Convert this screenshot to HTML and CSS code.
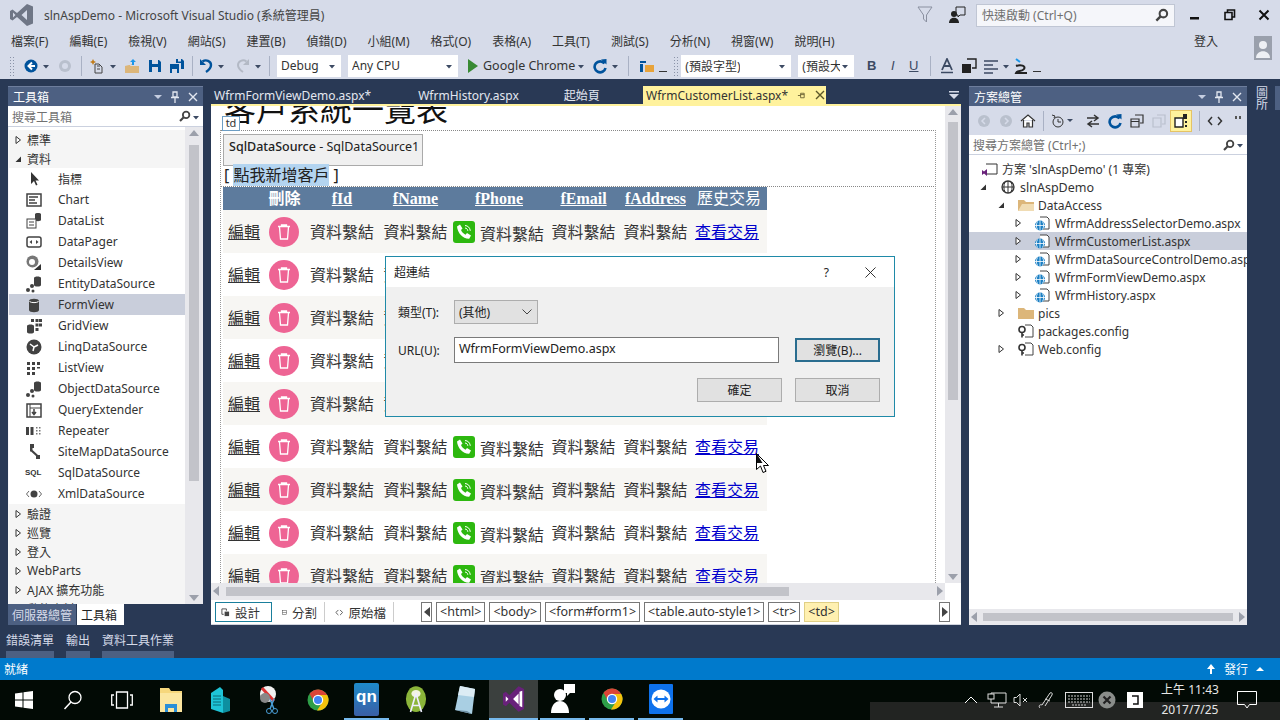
FILE: index.html
```html
<!DOCTYPE html>
<html lang="zh-Hant">
<head>
  <meta charset="UTF-8" />
  <title>slnAspDemo - Microsoft Visual Studio</title>
  <link rel="stylesheet" href="styles.css">
</head>
<body>
  <!-- shared icons -->
  <svg class="defs" width="0" height="0">
    <symbol id="dd" viewBox="0 0 8 8"><path d="M1 3h6L4 6.500z" fill="#3c4a63"/></symbol>
    <symbol id="open-tri" viewBox="0 0 10 10"><path d="M3 1.500 7.500 5 3 8.500z" fill="#fff" stroke="#333" stroke-width="1"/></symbol>
    <symbol id="down-tri" viewBox="0 0 10 10"><path d="M8 2.500V8H2.500z" fill="#333"/></symbol>
    <symbol id="magnifier" viewBox="0 0 16 16"><circle cx="10" cy="6" r="4" fill="none" stroke="#444" stroke-width="2.200"/><path d="M7 9 2.500 13.500" stroke="#444" stroke-width="2.600"/></symbol>
    <symbol id="trash" viewBox="0 0 30 30"><circle cx="15" cy="15" r="15" fill="#ee6494"/><path d="M9 9.500h12M12.500 9.500V8h5v1.500M10.500 10l1 12h7l1-12" fill="none" stroke="#fff" stroke-width="1.300"/></symbol>
    <symbol id="phone" viewBox="0 0 22 22"><rect width="22" height="22" rx="3" fill="#2db80f"/><path d="M4 5.500 7 3.500l2.500 4-1.500 1.500c.8 2 2.500 3.800 4.500 4.700L14 12l4 2.500-1.800 3.200C10 18 4.500 12 4 5.500z" fill="#fff"/><path d="M12 4.500c3 .2 5 2.300 5.300 5.300M12 7c1.500.1 2.700 1.200 2.800 2.800" fill="none" stroke="#fff" stroke-width="1"/></symbol>
    <symbol id="page-web" viewBox="0 0 18 16"><path d="M6 2h7l2 2v10H7" fill="#fff" stroke="#444"/><circle cx="6" cy="10.500" r="5" fill="#1a7fc4"/><path d="M1 10.500h10M6 5.500v10M3.500 6.500c-1.500 2.500-1.500 5.500 0 8M8.500 6.500c1.500 2.500 1.500 5.500 0 8" stroke="#fff" stroke-width=".8" fill="none"/></symbol>
    <symbol id="config" viewBox="0 0 18 16"><path d="M8 2h6l2 2v10H8" fill="#fff" stroke="#444"/><circle cx="5" cy="6.500" r="3" fill="none" stroke="#333" stroke-width="1.600"/><path d="M5 9v5.500M5 12h2" stroke="#333" stroke-width="1.600"/></symbol>
    <symbol id="folder" viewBox="0 0 18 16"><path d="M1 3h6l2 2h8v9H1z" fill="#dcb67a"/></symbol>
    <symbol id="cyl" viewBox="0 0 18 18"><path d="M4 5c0-3 10-3 10 0v9c0 3-10 3-10 0z" fill="#424242"/><path d="M4.500 5.500c1.500 1.500 7.500 1.500 9 0" stroke="#fff" fill="none"/></symbol>
    <symbol id="entity" viewBox="0 0 18 18"><path d="M9 3c0-2 7-2 7 0v7c0 2-7 2-7 0z" fill="#424242"/><circle cx="3" cy="15" r="2" fill="#424242"/><circle cx="7" cy="11" r="2" fill="#424242"/><circle cx="8" cy="16" r="1.500" fill="#424242"/></symbol>
    <symbol id="chrome" viewBox="0 0 24 24"><circle cx="12" cy="12" r="10.500" fill="#2e9e48"/><path d="M12 7h9.200A10.500 10.500 0 0 1 11 22.500l4.500-7z" fill="#f4c20d"/><path d="M12 7h9.200A10.500 10.500 0 0 0 3.500 5.800l4.200 7.500A5 5 0 0 1 12 7z" fill="#db4437"/><circle cx="12" cy="12" r="5.200" fill="#fff"/><circle cx="12" cy="12" r="4" fill="#4285f4"/></symbol>
  </svg>

  <div class="app">
    <header class="titlebar">
      <svg class="vs-logo" viewBox="0 0 24 24" width="24" height="24"><path d="M17 1 23 3.500v17L17 23 7 14l-4.500 3.500L0 16V8l2.500-1.500L7 10zM17 7l-5.500 5 5.500 5zM3 9.500v5l2.500-2.500z" fill="#6f7686"/></svg>
      <span class="title-text">slnAspDemo - Microsoft Visual Studio (系統管理員)</span>
      <svg class="funnel" viewBox="0 0 16 18" width="16" height="18"><path d="M1 1h14L9.500 9v7L6.500 13V9z" fill="none" stroke="#8a90a0"/></svg>
      <svg class="feedback" viewBox="0 0 18 18" width="18" height="18"><circle cx="6" cy="8" r="3" fill="#222"/><path d="M1 17c0-7 10-7 10 0z" fill="#222"/><path d="M8 1h9v8h-5l-2 2V9H8z" fill="none" stroke="#222"/></svg>
      <div class="quick">
        <span>快速啟動 (Ctrl+Q)</span>
        <svg viewBox="0 0 16 16" width="15" height="15"><use href="#magnifier"/></svg>
      </div>
      <div class="winbtns">
        <svg viewBox="0 0 12 12" width="12" height="12"><rect x="1" y="8" width="9" height="2.500" fill="#111"/></svg>
        <svg viewBox="0 0 12 12" width="12" height="12"><path d="M3.500 3V1h7v7H8.500M1 3.500h7v7H1z" fill="none" stroke="#111" stroke-width="1.600"/></svg>
        <svg viewBox="0 0 12 12" width="12" height="12"><path d="M1.500 1.500l9 9M10.500 1.500l-9 9" stroke="#111" stroke-width="2"/></svg>
      </div>
    </header>

    <nav class="menubar">
      <span>檔案(F)</span><span>編輯(E)</span><span>檢視(V)</span><span>網站(S)</span><span>建置(B)</span><span>偵錯(D)</span><span>小組(M)</span><span>格式(O)</span><span>表格(A)</span><span>工具(T)</span><span>測試(S)</span><span>分析(N)</span><span>視窗(W)</span><span>說明(H)</span>
      <span class="signin">登入</span>
      <svg class="avatar" viewBox="0 0 18 24" width="18" height="24"><rect width="18" height="24" fill="#9aa0ac"/><circle cx="9" cy="9" r="4" fill="#eef0f4"/><path d="M2 22c0-9 14-9 14 0z" fill="#eef0f4"/></svg>
    </nav>

    <div class="toolbar">
      <i class="grip"></i>
      <svg class="tb g6" viewBox="0 0 16 16"><circle cx="8" cy="8" r="6.500" fill="#00539c"/><path d="M9 4.500 5.500 8 9 11.500M6 8h6" fill="none" stroke="#fff" stroke-width="2"/></svg>
      <svg class="dd"><use href="#dd"/></svg>
      <svg class="tb g4" viewBox="0 0 16 16"><circle cx="8" cy="8" r="6" fill="#b9c0cd"/><circle cx="8" cy="8" r="3" fill="#d6dbe9"/></svg>
      <i class="sep"></i>
      <svg class="tb" viewBox="0 0 16 16"><path d="M5 6h4l3 3v6H5z" fill="none" stroke="#444"/><path d="M3 1l1 2 2 1-2 1-1 2-1-2-2-1 2-1z" fill="#c27d1a"/><path d="M7 8h3M7 11h3" stroke="#444"/></svg>
      <svg class="dd"><use href="#dd"/></svg>
      <svg class="tb g4" viewBox="0 0 16 16"><path d="M1 8h14v7H1z" fill="#dcb67a"/><path d="M1 8h5l1-2h2" fill="#dcb67a"/><path d="M9 1l3 3h-2v3H8V4H6z" fill="#1c97ea"/></svg>
      <svg class="tb g3" viewBox="0 0 16 16"><path d="M2 2h10l2 2v10H2z" fill="#00539c"/><rect x="5" y="2" width="6" height="4" fill="#d6dbe9"/><rect x="5" y="9" width="6" height="5" fill="#d6dbe9"/></svg>
      <svg class="tb g2" viewBox="0 0 16 16"><path d="M1 6h9v9H1z" fill="#00539c"/><path d="M7 1h6l2 2v8h-3V5H7z" fill="#00539c"/><rect x="3" y="11" width="5" height="4" fill="#d6dbe9"/><rect x="9" y="1" width="3" height="2.500" fill="#d6dbe9"/></svg>
      <i class="sep sep-tight"></i>
      <svg class="tb" viewBox="0 0 16 16"><path d="M4.500 3.500C8 1 13 3 13 7c0 3-2 5-5 7" fill="none" stroke="#00539c" stroke-width="2.400"/><path d="M2 1v6h6z" fill="#00539c"/></svg>
      <svg class="dd g2"><use href="#dd"/></svg>
      <svg class="tb g8" viewBox="0 0 16 16"><path d="M11.500 3.500C8 1 3 3 3 7c0 3 2 5 5 7" fill="none" stroke="#b3b9c5" stroke-width="2"/><path d="M14 1v6H8z" fill="#b3b9c5"/></svg>
      <svg class="dd g3"><use href="#dd"/></svg>
      <i class="sep sep-wide"></i>
      <div class="combo combo-debug"><span>Debug</span><svg class="dd"><use href="#dd"/></svg></div>
      <div class="combo combo-cpu"><span>Any CPU</span><svg class="dd"><use href="#dd"/></svg></div>
      <svg class="play" viewBox="0 0 10 14" width="10" height="14"><path d="M0 0l10 7-10 7z" fill="#388a34"/></svg>
      <span class="run-label">Google Chrome</span>
      <svg class="dd"><use href="#dd"/></svg>
      <svg class="tb g4" viewBox="0 0 16 16"><path d="M12.500 5.500A5.500 5.500 0 1 0 13.500 10" fill="none" stroke="#00539c" stroke-width="2.600"/><path d="M9 1.500 14.500 1v5.500z" fill="#00539c"/></svg>
      <svg class="dd"><use href="#dd"/></svg>
      <i class="sep sep-run"></i>
      <svg class="tb" viewBox="0 0 16 16"><path d="M1 3h6v2H1zM1 6h3v8H1z" fill="#00539c"/><path d="M6 7h9v7H6z" fill="#e8a33a"/></svg>
      <span class="overflow"></span>
      <i class="grip grip-b"></i>
      <div class="combo combo-font"><span>(預設字型)</span><svg class="dd"><use href="#dd"/></svg></div>
      <div class="combo combo-size"><span>(預設大小)</span><svg class="dd"><use href="#dd"/></svg></div>
      <b class="fmt">B</b><em class="fmt">I</em><u class="fmt">U</u>
      <i class="sep"></i>
      <svg class="tb" viewBox="0 0 16 16"><path d="M3 12 8 1l5 11M5 8h6" fill="none" stroke="#3c4a63" stroke-width="1.800"/><path d="M2 14.500h12" stroke="#3c4a63" stroke-width="1.500"/></svg>
      <svg class="tb g2" viewBox="0 0 16 16"><rect x="1" y="6" width="9" height="9" fill="#222"/><path d="M6 1h9v9h-4" fill="none" stroke="#222" stroke-width="1.400"/></svg>
      <svg class="tb g2" viewBox="0 0 16 16"><path d="M1 3h14M1 7h9M1 11h14M1 15h9" stroke="#3c4a63" stroke-width="1.500"/></svg>
      <svg class="dd"><use href="#dd"/></svg>
      <svg class="tb" viewBox="0 0 16 16"><path d="M3 1l4 3" stroke="#1c97ea" stroke-width="2"/><path d="M3 8c5-2 10 0 8 3s-7 1-8 4h11" fill="none" stroke="#222" stroke-width="2"/></svg>
      <span class="overflow"></span>
    </div>

    <div class="workspace">
      <!-- toolbox -->
      <aside class="panel toolbox">
        <div class="panel-title"><span>工具箱</span><span class="panel-btns"><svg viewBox="0 0 8 8" width="8" height="8"><path d="M0 2h8L4 6z" fill="#c5cde0"/></svg><svg viewBox="0 0 10 12" width="10" height="12"><path d="M3 1h4v5H3zM1 6.500h8M5 7v5" fill="none" stroke="#e3e7f0" stroke-width="1.300"/></svg><svg viewBox="0 0 10 10" width="10" height="10"><path d="M1 1l8 8M9 1l-8 8" stroke="#e3e7f0" stroke-width="1.400"/></svg></span></div>
        <div class="search"><span>搜尋工具箱</span><svg viewBox="0 0 16 16" width="13" height="13"><use href="#magnifier"/></svg><svg class="dd"><use href="#dd"/></svg></div>
        <div class="toolbox-body">
          <ul class="toollist">
            <li class="group"><svg class="tri"><use href="#open-tri"/></svg>標準</li>
            <li class="group"><svg class="tri"><use href="#down-tri"/></svg>資料</li>
            <li class="item"><svg viewBox="0 0 18 18"><path d="M6 2v12l3-3 2 4.500 1.500-.7-2-4.300H14z" fill="#333"/></svg>指標</li>
            <li class="item"><svg viewBox="0 0 18 18"><rect x="2" y="3" width="14" height="12" fill="none" stroke="#424242" stroke-width="1.500"/><path d="M4 6h9M4 9h6M4 12h8" stroke="#424242" stroke-width="1.500"/></svg>Chart</li>
            <li class="item"><svg viewBox="0 0 18 18"><path d="M10 2c0-1.500 6-1.500 6 0v6c0 1.500-6 1.500-6 0z" fill="#424242"/><rect x="2" y="7" width="9" height="9" fill="#fff" stroke="#424242"/><path d="M4 10h5M4 13h5" stroke="#424242"/></svg>DataList</li>
            <li class="item"><svg viewBox="0 0 18 18"><rect x="2" y="4" width="14" height="10" rx="2" fill="none" stroke="#424242" stroke-width="1.500"/><path d="M9 4v10M7 7v4L4.500 9zM11 7v4l2.500-2z" fill="#424242"/></svg>DataPager</li>
            <li class="item"><svg viewBox="0 0 18 18"><circle cx="7.500" cy="7.500" r="6" fill="#777"/><circle cx="7" cy="8" r="3" fill="#fff"/><path d="M9 16l7-6v6z" fill="#333"/></svg>DetailsView</li>
            <li class="item"><svg viewBox="0 0 18 18"><use href="#entity"/></svg>EntityDataSource</li>
            <li class="item selected"><svg viewBox="0 0 18 18"><use href="#cyl"/></svg>FormView</li>
            <li class="item"><svg viewBox="0 0 18 18"><path d="M2 9c0-2 7-2 7 0v6c0 2-7 2-7 0z" fill="#424242"/><path d="M6 2h3v3H6zM10.500 2h3v3h-3zM14 2h3v3h-3zM10.500 6.500h3v3h-3zM14 6.500h3v3h-3zM10.500 11h3v3h-3z" fill="#424242"/></svg>GridView</li>
            <li class="item"><svg viewBox="0 0 18 18"><circle cx="9" cy="9" r="7.500" fill="#424242"/><path d="M5 6l4 3-1 4M9 9l4-2" stroke="#fff" stroke-width="1.500" fill="none"/></svg>LinqDataSource</li>
            <li class="item"><svg viewBox="0 0 18 18"><path d="M2 3h3v3H2zM7 3h3v3H7zM12 3h3v3h-3zM2 8h3v3H2zM7 8h3v3H7zM12 8h3v1.500h-3zM2 13h3v3H2zM7 13h3v3H7z" fill="#424242"/></svg>ListView</li>
            <li class="item"><svg viewBox="0 0 18 18"><use href="#entity"/></svg>ObjectDataSource</li>
            <li class="item"><svg viewBox="0 0 18 18"><rect x="2" y="3" width="14" height="13" fill="none" stroke="#424242" stroke-width="1.500"/><path d="M5 3v13M5 7h11" stroke="#424242"/><path d="M9 8v5M7 11l2 2.500 2-2.500" stroke="#424242" fill="none" stroke-width="1.500"/></svg>QueryExtender</li>
            <li class="item"><svg viewBox="0 0 18 18"><path d="M1 5h3v8H1zM5.500 5h3v8h-3z" fill="#424242"/><path d="M11 5h1.500v1.500H11zM14 5h1.500v1.500H14zM11 8h1.500v1.500H11zM14 8h1.500v1.500H14zM11 11h1.500v1.500H11zM14 11h1.500v1.500H14z" fill="#777"/></svg>Repeater</li>
            <li class="item"><svg viewBox="0 0 18 18"><path d="M5 1h4v4H7.500v2L13 12h2v4h-4v-3L6 8.500H5z" fill="#424242"/></svg>SiteMapDataSource</li>
            <li class="item"><span class="sql-mark">SQL</span>SqlDataSource</li>
            <li class="item"><svg viewBox="0 0 18 18"><circle cx="9" cy="9" r="3.500" fill="#424242"/><path d="M4 6 1.500 9 4 12M14 6l2.500 3-2.500 3" fill="none" stroke="#666"/></svg>XmlDataSource</li>
            <li class="group"><svg class="tri"><use href="#open-tri"/></svg>驗證</li>
            <li class="group"><svg class="tri"><use href="#open-tri"/></svg>巡覽</li>
            <li class="group"><svg class="tri"><use href="#open-tri"/></svg>登入</li>
            <li class="group"><svg class="tri"><use href="#open-tri"/></svg>WebParts</li>
            <li class="group"><svg class="tri"><use href="#open-tri"/></svg>AJAX 擴充功能</li>
            <li class="group"><svg class="tri"><use href="#open-tri"/></svg>動態資料</li>
          </ul>
          <div class="vscroll"><span class="arrow-up"></span><span class="thumb"></span><span class="arrow-down"></span></div>
        </div>
        <div class="panel-tabs"><span>伺服器總管</span><span class="on">工具箱</span></div>
      </aside>

      <!-- designer -->
      <main class="document">
        <div class="tabstrip">
          <span class="tab">WfrmFormViewDemo.aspx*</span>
          <span class="tab">WfrmHistory.aspx</span>
          <span class="tab">起始頁</span>
          <span class="tab active">WfrmCustomerList.aspx*<svg viewBox="0 0 10 10" width="9" height="9"><path d="M1 5h3M4 2.500h4v5H4zM4 4h4" fill="none" stroke="#6b6333"/></svg><svg viewBox="0 0 10 10" width="10" height="10"><path d="M1 1l8 8M9 1l-8 8" stroke="#5c5728" stroke-width="1.400"/></svg></span>
          <svg class="tab-menu" viewBox="0 0 10 10" width="10" height="10"><path d="M0 1h10v1.500H0zM0 4h10L5 9z" fill="#d6dbe9"/></svg>
        </div>
        <div class="design-area">
          <div class="design-left">
            <div class="surface">
              <h1>客戶系統一覽表</h1>
              <span class="td-tag">td</span>
              <div class="selected-cell">
                <div class="datasource"><b>SqlDataSource</b> - SqlDataSource1</div>
                <div class="addlink">[ <mark>點我新增客戶</mark> ]</div>
              </div>
              <table class="grid">
                <colgroup><col class="c1"><col class="c2"><col class="c3"><col class="c4"><col class="c5"><col class="c6"><col class="c7"><col class="c8"></colgroup>
                <thead><tr><th></th><th>刪除</th><th><u>fId</u></th><th><u>fName</u></th><th><u>fPhone</u></th><th><u>fEmail</u></th><th><u>fAddress</u></th><th class="plain">歷史交易</th></tr></thead>
                <tbody>
                  <tr><td class="edit">編輯</td><td><svg class="del"><use href="#trash"/></svg></td><td>資料繫結</td><td>資料繫結</td><td><div class="phone-cell"><svg class="phone"><use href="#phone"/></svg><span>資料繫結</span></div></td><td>資料繫結</td><td>資料繫結</td><td><a>查看交易</a></td></tr>
                  <tr><td class="edit">編輯</td><td><svg class="del"><use href="#trash"/></svg></td><td>資料繫結</td><td>資料繫結</td><td><div class="phone-cell"><svg class="phone"><use href="#phone"/></svg><span>資料繫結</span></div></td><td>資料繫結</td><td>資料繫結</td><td><a>查看交易</a></td></tr>
                  <tr><td class="edit">編輯</td><td><svg class="del"><use href="#trash"/></svg></td><td>資料繫結</td><td>資料繫結</td><td><div class="phone-cell"><svg class="phone"><use href="#phone"/></svg><span>資料繫結</span></div></td><td>資料繫結</td><td>資料繫結</td><td><a>查看交易</a></td></tr>
                  <tr><td class="edit">編輯</td><td><svg class="del"><use href="#trash"/></svg></td><td>資料繫結</td><td>資料繫結</td><td><div class="phone-cell"><svg class="phone"><use href="#phone"/></svg><span>資料繫結</span></div></td><td>資料繫結</td><td>資料繫結</td><td><a>查看交易</a></td></tr>
                  <tr><td class="edit">編輯</td><td><svg class="del"><use href="#trash"/></svg></td><td>資料繫結</td><td>資料繫結</td><td><div class="phone-cell"><svg class="phone"><use href="#phone"/></svg><span>資料繫結</span></div></td><td>資料繫結</td><td>資料繫結</td><td><a>查看交易</a></td></tr>
                  <tr><td class="edit">編輯</td><td><svg class="del"><use href="#trash"/></svg></td><td>資料繫結</td><td>資料繫結</td><td><div class="phone-cell"><svg class="phone"><use href="#phone"/></svg><span>資料繫結</span></div></td><td>資料繫結</td><td>資料繫結</td><td><a>查看交易</a></td></tr>
                  <tr><td class="edit">編輯</td><td><svg class="del"><use href="#trash"/></svg></td><td>資料繫結</td><td>資料繫結</td><td><div class="phone-cell"><svg class="phone"><use href="#phone"/></svg><span>資料繫結</span></div></td><td>資料繫結</td><td>資料繫結</td><td><a>查看交易</a></td></tr>
                  <tr><td class="edit">編輯</td><td><svg class="del"><use href="#trash"/></svg></td><td>資料繫結</td><td>資料繫結</td><td><div class="phone-cell"><svg class="phone"><use href="#phone"/></svg><span>資料繫結</span></div></td><td>資料繫結</td><td>資料繫結</td><td><a>查看交易</a></td></tr>
                  <tr><td class="edit">編輯</td><td><svg class="del"><use href="#trash"/></svg></td><td>資料繫結</td><td>資料繫結</td><td><div class="phone-cell"><svg class="phone"><use href="#phone"/></svg><span>資料繫結</span></div></td><td>資料繫結</td><td>資料繫結</td><td><a>查看交易</a></td></tr>
                </tbody>
              </table>
            </div>
            <div class="hscroll"><span class="arrow-left"></span><span class="hthumb"></span><span class="arrow-right"></span></div>
          </div>
          <div class="vscroll doc-vscroll"><span class="arrow-up"></span><span class="thumb"></span><span class="arrow-down"></span></div>
        </div>
        <div class="designbar">
          <span class="view-btn on"><svg viewBox="0 0 10 10" width="9" height="9"><path d="M1 1h5v2M1 1v6h2" fill="none" stroke="#444"/><rect x="4" y="4" width="5" height="5" fill="#444"/></svg>設計</span>
          <span class="view-btn"><svg viewBox="0 0 10 10" width="9" height="9"><rect x="1" y="1" width="8" height="8" fill="none" stroke="#444"/><path d="M1 5h8" stroke="#444"/></svg>分割</span>
          <span class="view-btn last"><svg viewBox="0 0 10 10" width="9" height="9"><path d="M4 2 1 5l3 3M6 2l3 3-3 3" fill="none" stroke="#444"/></svg>原始檔</span>
          <span class="chip-arrow"><svg viewBox="0 0 6 10" width="6" height="10"><path d="M6 0v10L0 5z" fill="#444"/></svg></span>
          <span class="chip">&lt;html&gt;</span><span class="chip">&lt;body&gt;</span><span class="chip">&lt;form#form1&gt;</span><span class="chip">&lt;table.auto-style1&gt;</span><span class="chip">&lt;tr&gt;</span><span class="chip hot">&lt;td&gt;</span>
          <span class="chip-arrow end"><svg viewBox="0 0 6 10" width="6" height="10"><path d="M0 0v10l6-5z" fill="#444"/></svg></span>
        </div>

        <!-- hyperlink dialog -->
        <div class="dialog">
          <div class="dialog-title"><span>超連結</span><span class="help">?</span><svg viewBox="0 0 12 12" width="11" height="11"><path d="M.5.500l11 11M11.500.500l-11 11" stroke="#222"/></svg></div>
          <div class="dialog-body">
            <div class="field">
              <label>類型(T):</label>
              <div class="select"><span>(其他)</span><svg viewBox="0 0 10 6" width="10" height="6"><path d="M.5.500 5 5 9.500.500" fill="none" stroke="#444"/></svg></div>
            </div>
            <div class="field url-field">
              <label>URL(U):</label>
              <div class="input">WfrmFormViewDemo.aspx</div>
              <button class="btn primary">瀏覽(B)...</button>
            </div>
            <div class="dialog-actions"><button class="btn">確定</button><button class="btn">取消</button></div>
          </div>
        </div>
      </main>

      <!-- solution explorer -->
      <aside class="panel solution">
        <div class="panel-title"><span>方案總管</span><span class="panel-btns"><svg viewBox="0 0 8 8" width="8" height="8"><path d="M0 2h8L4 6z" fill="#c5cde0"/></svg><svg viewBox="0 0 10 12" width="10" height="12"><path d="M3 1h4v5H3zM1 6.500h8M5 7v5" fill="none" stroke="#e3e7f0" stroke-width="1.300"/></svg><svg viewBox="0 0 10 10" width="10" height="10"><path d="M1 1l8 8M9 1l-8 8" stroke="#e3e7f0" stroke-width="1.400"/></svg></span></div>
        <div class="sol-toolbar">
          <svg viewBox="0 0 16 16"><circle cx="8" cy="8" r="6" fill="#b9c0cd"/><path d="M9 5 6 8l3 3" stroke="#d6dbe9" fill="none" stroke-width="1.500"/></svg>
          <svg viewBox="0 0 16 16"><circle cx="8" cy="8" r="6" fill="#b9c0cd"/><path d="M7 5l3 3-3 3" stroke="#d6dbe9" fill="none" stroke-width="1.500"/></svg>
          <svg viewBox="0 0 16 16"><path d="M1 8l7-6 7 6M3.500 7v7h3.500v-4h2v4h3.500V7" fill="#fff" stroke="#333" stroke-width="1.200"/></svg>
          <i class="sep"></i>
          <svg class="wide" viewBox="0 0 22 16"><circle cx="7" cy="9" r="5" fill="none" stroke="#333"/><path d="M7 6v3h3M1 2l3 1-1 2" fill="none" stroke="#333"/><path d="M16 6h6l-3 3z" fill="#3c4a63"/></svg>
          <svg viewBox="0 0 16 16"><path d="M2 5h11M9 2l4 3-4 3M14 11H3M7 8l-4 3 4 3" fill="none" stroke="#333" stroke-width="1.500"/></svg>
          <svg viewBox="0 0 16 16"><path d="M12.500 5.500A5.500 5.500 0 1 0 13.500 10" fill="none" stroke="#00539c" stroke-width="2.600"/><path d="M9 1.500 14.500 1v5.500z" fill="#00539c"/></svg>
          <svg viewBox="0 0 16 16"><path d="M6 2h8v8h-3M2 6h8v8H2zM2 8.500h8" fill="none" stroke="#333" stroke-width="1.200"/></svg>
          <svg viewBox="0 0 16 16"><path d="M6 2h8v9h-3M2 5h8v9H2z" fill="none" stroke="#b9c0cd" stroke-width="1.200"/></svg>
          <span class="toggled"><svg viewBox="0 0 16 16"><path d="M2 5h8v9H2z" fill="#fff" stroke="#222" stroke-width="1.400"/><path d="M10 1h4v5h-4zM12 8h2v2h-2zM12 12h2v2h-2z" fill="#222"/></svg></span>
          <i class="sep"></i>
          <svg viewBox="0 0 16 16"><path d="M5 4 1.500 8 5 12M11 4l3.500 4-3.500 4" fill="none" stroke="#333" stroke-width="1.500"/></svg>
          <span class="sol-more"></span>
        </div>
        <div class="search sol-search"><span>搜尋方案總管 (Ctrl+;)</span><svg viewBox="0 0 16 16" width="13" height="13"><use href="#magnifier"/></svg><svg class="dd"><use href="#dd"/></svg></div>
        <ul class="tree">
          <li class="lv0"><svg viewBox="0 0 18 16"><path d="M5 3h11v10H5" fill="#fff" stroke="#333"/><path d="M1 9l2 1.500L6 8v7l-3-2.500-2 1.500z" fill="#68217a"/></svg>方案 'slnAspDemo' (1 專案)</li>
          <li class="lv1 strong"><svg class="tri"><use href="#down-tri"/></svg><svg viewBox="0 0 18 16"><circle cx="9" cy="8" r="6" fill="none" stroke="#333" stroke-width="1.300"/><path d="M3 8h12M9 2v12M6 3c-1.500 3-1.500 7 0 10M12 3c1.500 3 1.500 7 0 10" fill="none" stroke="#333"/></svg>slnAspDemo</li>
          <li class="lv2"><svg class="tri"><use href="#down-tri"/></svg><svg viewBox="0 0 18 16"><path d="M1 3h6l2 2h8v9H1z" fill="#dcb67a"/><path d="M5 7h12v7H1z" fill="#f0dcb4"/></svg>DataAccess</li>
          <li class="lv3"><svg class="tri"><use href="#open-tri"/></svg><svg viewBox="0 0 18 16"><use href="#page-web"/></svg>WfrmAddressSelectorDemo.aspx</li>
          <li class="lv3 selected"><svg class="tri"><use href="#open-tri"/></svg><svg viewBox="0 0 18 16"><use href="#page-web"/></svg>WfrmCustomerList.aspx</li>
          <li class="lv3"><svg class="tri"><use href="#open-tri"/></svg><svg viewBox="0 0 18 16"><use href="#page-web"/></svg>WfrmDataSourceControlDemo.aspx</li>
          <li class="lv3"><svg class="tri"><use href="#open-tri"/></svg><svg viewBox="0 0 18 16"><use href="#page-web"/></svg>WfrmFormViewDemo.aspx</li>
          <li class="lv3"><svg class="tri"><use href="#open-tri"/></svg><svg viewBox="0 0 18 16"><use href="#page-web"/></svg>WfrmHistory.aspx</li>
          <li class="lv2-b"><svg class="tri"><use href="#open-tri"/></svg><svg viewBox="0 0 18 16"><use href="#folder"/></svg>pics</li>
          <li class="lv2-b no-tri"><svg viewBox="0 0 18 16"><use href="#config"/></svg>packages.config</li>
          <li class="lv2-b"><svg class="tri"><use href="#open-tri"/></svg><svg viewBox="0 0 18 16"><use href="#config"/></svg>Web.config</li>
        </ul>
        <div class="hscroll sol-hscroll"><span class="arrow-left"></span><span class="hthumb"></span><span class="arrow-right"></span></div>
      </aside>

      <div class="rightstrip"><span>圖<br>所</span><i></i></div>
    </div>

    <div class="bottomtabs">
      <div><span>錯誤清單</span><i></i></div>
      <div><span>輸出</span><i></i></div>
      <div><span>資料工具作業</span><i></i></div>
    </div>

    <footer class="statusbar">
      <span>就緒</span>
      <span class="publish"><svg viewBox="0 0 10 12" width="10" height="12"><path d="M5 1 9 6H6v5H4V6H1z" fill="#fff"/></svg>發行<svg viewBox="0 0 8 6" width="8" height="6"><path d="M0 5h8L4 1z" fill="#fff"/></svg></span>
    </footer>

    <div class="taskbar">
      <span class="task first"><svg viewBox="0 0 18 18" width="18" height="18"><path d="M0 2.500 7.500 1.500V8.500H0zM8.500 1.300 18 0V8.500H8.500zM0 9.500H7.500V16.500L0 15.500zM8.500 9.500H18V18L8.500 16.700z" fill="#fff"/></svg></span>
      <span class="task"><svg viewBox="0 0 20 20" width="20" height="20"><circle cx="12" cy="7.500" r="6" fill="none" stroke="#fff" stroke-width="1.300"/><path d="M8 12 1.500 19" stroke="#fff" stroke-width="1.500"/></svg></span>
      <span class="task"><svg viewBox="0 0 22 18" width="22" height="18"><path d="M5.500 1h11v16h-11zM3 4H.7v10H3M19 4h2.300v10H19" fill="none" stroke="#fff" stroke-width="1.300"/></svg></span>
      <span class="task"><svg viewBox="0 0 24 26" width="24" height="26"><path d="M1 1h9l2 3h11v21H1z" fill="#f6d77c"/><path d="M1 6h22v19H1z" fill="#fbe6a0"/><path d="M6 17h12v8h-3v-4H9v4H6z" fill="#2a8fd8"/></svg></span>
      <span class="task"><svg viewBox="0 0 24 30" width="24" height="30"><path d="M3 8l9-6 3 3v23L3 24z" fill="#1ec3d6"/><path d="M15 11l7 3v12l-7 2z" fill="#0d8fa0"/><path d="M5 11h8M5 14h8M5 17h8M5 20h8" stroke="#0a6a78"/></svg></span>
      <span class="task"><svg viewBox="0 0 24 30" width="24" height="30"><circle cx="11" cy="9" r="8" fill="#f1f1f1"/><path d="M5 3l12 13" stroke="#d33" stroke-width="3"/><circle cx="8" cy="13" r="5" fill="#888"/><path d="M13 14l4 10M17 14l-4 10" stroke="#4a9fd8" stroke-width="1.500"/><circle cx="12" cy="26" r="2.500" fill="none" stroke="#4a9fd8"/><circle cx="18" cy="26" r="2.500" fill="none" stroke="#4a9fd8"/></svg></span>
      <span class="task"><svg viewBox="0 0 24 24" width="24" height="30"><use href="#chrome"/></svg></span>
      <span class="task lit"><span class="qn">qn</span></span>
      <span class="task"><svg viewBox="0 0 24 32" width="22" height="32"><ellipse cx="12" cy="15" rx="11" ry="14" fill="#8bb53a"/><ellipse cx="12" cy="9" rx="5" ry="4" fill="#f2f4e2"/><path d="M12 9 6 29M12 9l6 20M8 22h8" stroke="#eef" stroke-width="1.800" fill="none"/></svg></span>
      <span class="task"><svg viewBox="0 0 24 30" width="24" height="30"><path d="M7 1l15 3-3 25L2 25z" fill="#a9cfe3"/><path d="M7 1l15 3-1 8L5 10z" fill="#dcecf4"/><path d="M2 25l17 4-5-3z" fill="#6e8fa3"/></svg></span>
      <span class="task active"><svg viewBox="0 0 24 30" width="22" height="30"><path d="M17 1 23 4v22l-6 3L7 19l-4 4-3-2V9l3-2 4 4z" fill="#68217a"/><path d="M17 9l-6 6 6 6zM3 12v6l3-3z" fill="#fff"/><path d="M18 7l3-1v18l-3-1.500z" fill="#fff"/></svg></span>
      <span class="task lit"><svg viewBox="0 0 24 32" width="24" height="32"><circle cx="9" cy="12" r="6" fill="#fff"/><path d="M0 30c0-16 18-16 18 0z" fill="#fff"/><path d="M13 1h11v9h-5l-3 3v-3h-3z" fill="#fff"/></svg></span>
      <span class="task lit"><svg viewBox="0 0 24 24" width="24" height="30"><use href="#chrome"/></svg></span>
      <span class="task lit"><svg viewBox="0 0 24 30" width="24" height="30"><rect width="24" height="30" rx="1" fill="#0e72ed"/><circle cx="12" cy="15" r="9.500" fill="#fff"/><path d="M4.500 15l4-3.500V14h7v-2.500l4 3.500-4 3.500V16h-7v2.500z" fill="#0e72ed"/></svg></span>

      <div class="tray">
        <svg viewBox="0 0 14 8" width="14" height="8"><path d="M1 7l6-6 6 6" fill="none" stroke="#fff"/></svg>
        <svg viewBox="0 0 20 16" width="20" height="16"><path d="M4 1h15v10H4zM11.500 11v4M7 15h9" fill="none" stroke="#ddd"/><rect x="1" y="2" width="6" height="5" fill="#020a05" stroke="#ddd"/></svg>
        <svg viewBox="0 0 18 14" width="18" height="14"><path d="M1 4.500h2.500L7 1v12L3.500 9.500H1z" fill="none" stroke="#ddd"/><path d="M10 5l4 4M14 5l-4 4" stroke="#ddd"/></svg>
        <svg viewBox="0 0 20 18" width="20" height="18"><path d="M3 17c-2-2 0-4 2-3M5 14 13 2c1-1 3 0 2 2L8 15M8 8l5 2" fill="none" stroke="#ddd"/></svg>
        <svg viewBox="0 0 28 16" width="28" height="16"><rect x=".5" y=".5" width="27" height="15" fill="none" stroke="#ddd"/><path d="M3 4h22M3 7h22M3 10h22M7 13h14" stroke="#ccc" stroke-dasharray="2 1"/></svg>
        <svg viewBox="0 0 18 18" width="18" height="18"><circle cx="9" cy="9" r="8.500" fill="#8a8d8a"/><path d="M5.500 5.500l7 7M12.500 5.500l-7 7" stroke="#222" stroke-width="2.200"/></svg>
        <svg viewBox="0 0 16 16" width="16" height="16"><rect width="16" height="16" fill="#fff"/><path d="M5 4h6v8H6" fill="none" stroke="#111" stroke-width="1.500"/></svg>
        <div class="clock"><span>上午 11:43</span><span>2017/7/25</span></div>
        <svg class="notify" viewBox="0 0 20 18" width="20" height="18"><path d="M.5.500h19v13h-7L10 17l-2.500-3.500h-7z" fill="none" stroke="#fff"/></svg>
      </div>
      <i class="ghost"></i>
    </div>

    <svg class="cursor" viewBox="0 0 13 21" width="13" height="21"><path d="M.5.500V16.500L4.500 13 7 19.500 10 18.300 7.500 12.500H12.500z" fill="#fff" stroke="#000"/><path d="M1 1v9l5.500 0z" fill="#111"/></svg>
  </div>
</body>
</html>
```

FILE: styles.css
```css
* { box-sizing: border-box; }
body {
  margin: 0;
  font-family: "Noto Sans", "Noto Sans CJK TC", sans-serif;
  font-size: 12px;
  color: #3c3c3c;
}
ul { list-style: none; margin: 0; padding: 0; }
.defs { position: absolute; }
.app {
  position: relative;
  width: 1280px;
  height: 720px;
  overflow: hidden;
  background: #293955;
  display: flex;
  flex-direction: column;
}

/* title + menu */
.titlebar {
  height: 30px;
  background: #d6dbe9;
  display: flex;
  align-items: center;
  padding-left: 10px;
}
.vs-logo { margin-right: 10px; }
.title-text { font-size: 12px; color: #444; flex: 1; }
.funnel { margin-right: 15px; }
.feedback { margin-right: 10px; }
.quick {
  width: 199px;
  height: 23px;
  background: #f5f6fa;
  border: 1px solid #c0c6d4;
  display: flex;
  align-items: center;
  justify-content: space-between;
  padding: 0 5px;
  color: #707070;
  font-size: 12px;
}
.winbtns {
  width: 105px;
  display: flex;
  justify-content: space-between;
  padding: 0 10px 0 14px;
}
.menubar {
  height: 22px;
  background: #d6dbe9;
  display: flex;
  align-items: center;
  gap: 21px;
  padding-left: 11px;
  font-size: 12px;
  color: #333;
  position: relative;
}
.signin { margin-left: auto; margin-right: 62px; }
.avatar { position: absolute; top: 6px; right: 8px; }

/* toolbar */
.toolbar {
  height: 27px;
  background: #d6dbe9;
  display: flex;
  align-items: center;
  padding-left: 9px;
}
.grip {
  width: 6px;
  height: 20px;
  margin-right: 7px;
  flex: none;
  background-image: radial-gradient(#8a93a8 1px, transparent 1px);
  background-size: 3px 3px;
}
.grip-b { margin-left: 4px; margin-right: 2px; }
.tb { width: 16px; height: 16px; margin: 0 2px; flex: none; }
.g2 { margin-left: 4px; }
.g3 { margin-left: 5px; }
.g4 { margin-left: 6px; }
.g6 { margin-left: 1px; }
.g8 { margin-left: 9px; }
.dd { width: 8px; height: 8px; flex: none; margin: 0 1px; }
.sep {
  width: 1px;
  height: 20px;
  background: #a9b1c4;
  margin: 0 6px;
  flex: none;
}
.sep-tight { margin: 0 3px 0 5px; }
.sep-wide { margin: 0 7px 0 6px; }
.sep-run { margin: 0 8px; }
.combo {
  height: 22px;
  background: #fff;
  display: flex;
  align-items: center;
  justify-content: space-between;
  padding: 0 4px;
  margin-right: 7px;
  font-size: 12px;
  color: #333;
  flex: none;
}
.combo span { white-space: nowrap; overflow: hidden; }
.combo-debug { width: 64px; }
.combo-cpu { width: 110px; margin-right: 10px; }
.combo-font { width: 110px; }
.combo-size { width: 56px; margin-right: 7px; }
.play { flex: none; margin-right: 5px; }
.run-label { font-size: 12.500px; color: #333; white-space: nowrap; margin-right: 1px; }
.overflow { width: 8px; height: 12px; border-bottom: 1px solid #333; margin: 0 2px; flex: none; }
.fmt { width: 21px; text-align: center; font-size: 13px; color: #3c4a63; flex: none; font-family: "Liberation Sans", sans-serif; }

/* main area */
.workspace {
  height: 546px;
  padding: 7px 0 0 8px;
  display: flex;
  gap: 8px;
}
.panel {
  display: flex;
  flex-direction: column;
  background: #fff;
  border-top: 1px solid #6d7d9c;
}
.panel-title {
  height: 19px;
  background: #4d6082;
  color: #fff;
  font-size: 12px;
  display: flex;
  align-items: center;
  justify-content: space-between;
  padding: 0 5px;
  flex: none;
}
.panel-btns { display: flex; align-items: center; gap: 8px; }
.search {
  height: 21px;
  background: #fff;
  display: flex;
  align-items: center;
  padding: 1px 2px 0 4px;
  color: #717171;
  font-size: 12px;
  flex: none;
  border-bottom: 1px solid #cbd1df;
}
.search span { flex: 1; }

.toolbox { width: 195px; }
.toolbox-body { height: 477px; display: flex; background: #f6f6f8; overflow: hidden; flex: none; }
.toollist { width: 176px; margin-left: 1px; padding-top: 3px; background: #fff; overflow: hidden; height: 477px; }
.group {
  height: 19px;
  display: flex;
  align-items: center;
  background: #f5f5f5;
  color: #333;
  padding-left: 4px;
  font-size: 12px;
  white-space: nowrap;
}
.tri { width: 10px; height: 10px; margin-right: 4px; flex: none; }
.item {
  height: 21px;
  display: flex;
  align-items: center;
  color: #333;
  font-size: 12px;
  padding-left: 16px;
}
.item svg { width: 18px; height: 18px; margin-right: 15px; flex: none; }
.item.selected { background: #c9cedb; }
.sql-mark {
  width: 18px;
  margin-right: 15px;
  font-size: 8px;
  font-weight: 700;
  color: #333;
  font-family: "Liberation Sans", sans-serif;
}
.vscroll {
  flex: 1;
  position: relative;
  background: #e8e8ec;
}
.vscroll .thumb { position: absolute; left: 4px; right: 4px; top: 18px; height: 336px; background: #c2c3c9; }
.arrow-up, .arrow-down {
  position: absolute;
  left: 50%;
  margin-left: -5px;
  border: 5px solid transparent;
}
.arrow-up { top: 3px; border-top: 0; border-bottom: 6px solid #9ca0ab; }
.arrow-down { bottom: 3px; border-bottom: 0; border-top: 6px solid #9ca0ab; }
.panel-tabs {
  height: 21px;
  background: #293955;
  display: flex;
  align-items: stretch;
  flex: 1;
}
.panel-tabs span {
  padding: 2px 4px 0;
  width: 68px;
  background: #4d6082;
  color: #d6dbe9;
  white-space: nowrap;
}
.panel-tabs .on { background: #fff; color: #222; width: 47px; margin-left: 1px; }

/* document */
.document { width: 750px; display: flex; flex-direction: column; background: #fff; }
.tabstrip {
  height: 18px;
  background: #293955;
  display: flex;
  align-items: center;
  color: #e3e7f0;
  font-size: 12px;
  position: relative;
  flex: none;
}
.tab { margin-left: 3px; margin-right: 44px; white-space: nowrap; }
.tab:nth-child(2) { margin-right: 42px; }
.tab.active {
  margin: 0;
  height: 18px;
  background: #fff29d;
  color: #333;
  padding: 0 5px 0 3px;
  display: flex;
  align-items: center;
  gap: 9px;
  width: 183px;
  position: absolute;
  left: 432px;
}
.tab.active svg { flex: none; }
.tab-menu { position: absolute; right: 2px; top: 4px; }
.design-area { height: 496px; display: flex; border-top: 2px solid #fff29d; flex: none; }
.design-left { width: 734px; display: flex; flex-direction: column; }
.doc-vscroll { background: #e8e8ec; height: 477px; flex: 1; }
.doc-vscroll .thumb { left: 3px; right: 3px; top: 16px; height: 278px; }
.surface {
  height: 477px;
  overflow: hidden;
  position: relative;
  padding-left: 9px;
  font-size: 16px;
  color: #333;
  background: #fff;
}
.surface::before, .surface::after {
  content: "";
  position: absolute;
  top: 24px;
  bottom: 0;
  border-left: 1px dotted #999;
}
.surface::before { left: 9px; }
.surface::after { left: 724px; }
.surface h1 {
  font-size: 32px;
  font-weight: 400;
  line-height: 40px;
  margin: -17px 0 0 4px;
  color: #111;
  height: 41px;
}
.td-tag {
  position: absolute;
  left: 11px;
  top: 10px;
  width: 18px;
  height: 15px;
  border: 1px solid #6d9ec4;
  background: #fff;
  font-size: 11px;
  line-height: 12px;
  text-align: center;
  color: #333;
}
.selected-cell {
  width: 716px;
  height: 57px;
  border: 1px dotted #888;
  padding: 3px 0 0 2px;
  background: #fff;
}
.datasource {
  width: 200px;
  height: 32px;
  border: 1px solid #aaa;
  background: #f0f0f0;
  font-size: 12.500px;
  line-height: 23px;
  padding-left: 5px;
  color: #222;
}
.datasource b { font-weight: 500; }
.addlink { font-size: 16px; line-height: 18px; padding-left: 1px; color: #222; white-space: nowrap; }
.addlink mark { background: #b3d4f0; color: #222; }
.grid {
  border-collapse: collapse;
  table-layout: fixed;
  width: 544px;
  margin-left: 3px;
}
.c1 { width: 42px; }
.c2 { width: 39px; }
.c3 { width: 76px; }
.c4 { width: 71px; }
.c5 { width: 96px; }
.c6 { width: 73px; }
.c7 { width: 71px; }
.c8 { width: 76px; }
.grid th {
  height: 23px;
  padding: 0;
  background: #5d7b9d;
  color: #fff;
  font: 700 16px/18px "Liberation Serif", "Noto Sans CJK TC", serif;
}
.grid th.plain { font-weight: 400; }
.grid td { height: 43px; padding: 0; text-align: center; white-space: nowrap; line-height: 22px; }
.grid tbody tr:nth-child(odd) { background: #f7f6f3; }
.grid .edit { text-align: left; padding-left: 5px; text-decoration: underline; }
.grid td:last-child { padding-right: 4px; }
.grid a { color: #0000cc; text-decoration: underline; }
.del { width: 30px; height: 30px; display: block; margin: 0 auto; position: relative; left: -1px; }
.phone-cell { display: flex; height: 28px; padding-left: 2px; align-items: flex-start; gap: 5px; }
.phone { width: 22px; height: 22px; flex: none; margin-top: 3px; }
.phone-cell span { margin-top: 5px; }

.hscroll { height: 17px; background: #e8e8ec; position: relative; flex: none; }
.hthumb { position: absolute; left: 15px; width: 563px; top: 4px; height: 9px; background: #c2c3c9; }
.arrow-left, .arrow-right { position: absolute; top: 3px; border: 5px solid transparent; }
.arrow-left { left: 2px; border-left: 0; border-right: 6px solid #9ca0ab; }
.arrow-right { right: 2px; border-right: 0; border-left: 6px solid #9ca0ab; }

.designbar {
  height: 25px;
  background: #fff;
  border-bottom: 1px solid #d0d4de;
  display: flex;
  align-items: center;
  padding-left: 4px;
  font-size: 12.500px;
  color: #333;
  position: relative;
  flex: none;
}
.view-btn {
  height: 20px;
  display: flex;
  align-items: center;
  gap: 5px;
  padding: 0 7px 0 5px;
  margin-right: 5px;
  border-right: 1px solid #ccc;
  white-space: nowrap;
  width: 48px;
}
.view-btn.on { width: 57px; border: 1px solid #1a7f9c; }
.view-btn.last { width: 64px; margin-right: 27px; }
.chip-arrow {
  width: 11px;
  height: 20px;
  border: 1px solid #777;
  display: flex;
  align-items: center;
  justify-content: center;
  margin-right: 4px;
  flex: none;
}
.chip-arrow.end { position: absolute; right: 11px; margin: 0; }
.chip {
  height: 20px;
  border: 1px solid #777;
  padding: 0 3px;
  margin-right: 4px;
  line-height: 17px;
  white-space: nowrap;
}
.chip.hot { background: #fff0b0; border-color: #e0cf85; }

/* dialog */
.dialog {
  position: absolute;
  left: 385px;
  top: 256px;
  width: 510px;
  height: 161px;
  border: 1px solid #1f8aa8;
  background: #f0f0f0;
  z-index: 5;
}
.dialog-title {
  height: 30px;
  background: #fff;
  display: flex;
  align-items: center;
  padding: 0 18px 0 8px;
  font-size: 12px;
  color: #222;
}
.dialog-title span:first-child { flex: 1; }
.help { margin-right: 36px; }
.dialog-body { padding: 13px 14px 0 12px; }
.field { display: flex; align-items: center; height: 24px; font-size: 12px; color: #222; }
.field label { width: 56px; }
.select {
  width: 84px;
  height: 24px;
  background: #e1e1e1;
  border: 1px solid #adadad;
  display: flex;
  align-items: center;
  justify-content: space-between;
  padding: 0 5px 0 4px;
}
.url-field { margin-top: 13px; height: 26px; justify-content: flex-start; }
.input {
  width: 326px;
  height: 26px;
  background: #fff;
  border: 1px solid #7a7a7a;
  padding-left: 4px;
  line-height: 22px;
  font-size: 12.500px;
  margin-right: 16px;
}
.btn {
  width: 85px;
  height: 24px;
  background: #e1e1e1;
  border: 1px solid #adadad;
  font: inherit;
  font-size: 12px;
  color: #222;
  padding: 0;
}
.btn.primary { border: 2px solid #2a6d8f; }
.dialog-actions { display: flex; justify-content: flex-end; gap: 13px; margin-top: 15px; }

/* solution explorer */
.solution { width: 278px; }
.sol-toolbar {
  height: 29px;
  background: #d6dbe9;
  display: flex;
  align-items: center;
  padding-left: 7px;
  gap: 6px;
  flex: none;
  position: relative;
}
.sol-toolbar svg { width: 16px; height: 16px; flex: none; }
.sol-toolbar svg.wide { width: 22px; margin-right: 6px; }
.sol-toolbar .sep { margin: 0 1px; }
.toggled { width: 22px; height: 22px; margin-left: -3px; background: #fff29d; border: 1px solid #e5c365; display: flex; align-items: center; justify-content: center; }
.sol-more { position: absolute; right: 6px; top: 10px; width: 6px; height: 3px; border-left: 2px solid #555; border-right: 2px solid #555; }
.sol-search { height: 20px; }
.tree { flex: 1; padding-top: 5px; overflow: hidden; font-size: 12px; color: #333; white-space: nowrap; }
.tree li { height: 18px; display: flex; align-items: center; }
.tree li > svg { width: 18px; height: 16px; margin-right: 3px; flex: none; }
.tree li > svg.tri { width: 10px; height: 10px; margin-right: 11px; }
.tree .lv0 { padding-left: 12px; }
.tree .lv1 { padding-left: 9px; }
.tree .lv2 { padding-left: 27px; }
.tree .lv2-b { padding-left: 27px; }
.tree .no-tri { padding-left: 48px; }
.tree .lv3 { padding-left: 44px; }
.tree .selected { background: #c9cedb; }
.tree .strong { font-size: 12.500px; }
.sol-hscroll { height: 16px; }
.sol-hscroll .hthumb { left: 14px; width: 250px; top: 4px; height: 8px; }

.rightstrip { flex: 1; color: #d6dbe9; position: relative; margin-left: -7px; font-size: 12px; line-height: 12px; padding: 1px 0 0 8px; }
.rightstrip i { position: absolute; right: 0; top: 0; width: 5px; height: 24px; background: #4d6082; }

.bottomtabs {
  height: 33px;
  display: flex;
  gap: 12px;
  padding-left: 6px;
  color: #d6dbe9;
  font-size: 12px;
  flex: none;
}
.bottomtabs div { display: flex; flex-direction: column; justify-content: flex-end; }
.bottomtabs span { line-height: 18px; }
.bottomtabs i { display: block; height: 7px; margin-top: 1px; background: #4d6082; }

.statusbar {
  height: 22px;
  background: #007acc;
  color: #fff;
  display: flex;
  align-items: center;
  justify-content: space-between;
  padding: 0 16px 0 4px;
  flex: none;
}
.publish { display: flex; align-items: center; gap: 8px; }

/* taskbar */
.taskbar {
  height: 40px;
  background: #020a05;
  display: flex;
  align-items: stretch;
  position: relative;
  flex: none;
}
.task { width: 49px; display: flex; align-items: center; justify-content: center; flex: none; }
.task.first { margin-left: -1px; }
.task.active { background: #3b403e; border-bottom: 2px solid #76b9ed; }
.task.lit { border-bottom: 2px solid #76b9ed; margin: 0 2px; width: 45px; }
.qn {
  width: 25px;
  height: 33px;
  border-radius: 2px;
  background: linear-gradient(#1e8ac9, #3a5fa6);
  color: #fff;
  font: 700 17px/28px "Liberation Sans", sans-serif;
  text-align: center;
}
.tray {
  position: absolute;
  left: 964px;
  right: 0;
  top: 0;
  bottom: 0;
  display: flex;
  align-items: center;
  color: #e6e6e6;
  z-index: 2;
}
.tray svg { flex: none; }
.tray svg:nth-child(2) { margin-left: 9px; }
.tray svg:nth-child(3) { margin-left: 6px; }
.tray svg:nth-child(4) { margin-left: 6px; }
.tray svg:nth-child(5) { margin-left: 8px; }
.tray svg:nth-child(6) { margin-left: 5px; }
.tray svg:nth-child(7) { margin-left: 11px; }
.clock { display: flex; flex-direction: column; align-items: center; margin-left: 15px; width: 64px; line-height: 20px; white-space: nowrap; }
.tray .notify { margin-left: 15px; }
.ghost { position: absolute; left: 870px; right: 0; bottom: 0; height: 18px; background: #222422; }

.cursor { position: absolute; left: 756px; top: 453px; z-index: 9; }
```
